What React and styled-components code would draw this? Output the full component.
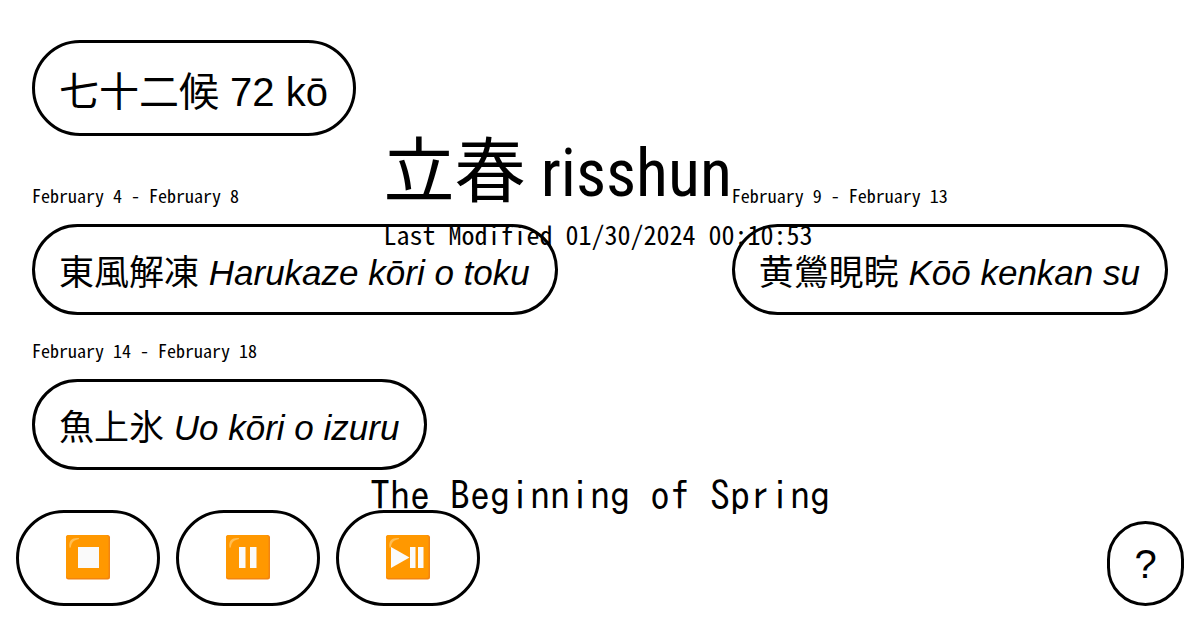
import React from "react";
import styled, { createGlobalStyle, css } from "styled-components";

const sans = `"Liberation Sans", "Noto Sans CJK JP", sans-serif`;
const narrow = `"Roboto Condensed", "Noto Sans CJK JP", sans-serif`;
const mono = `"Noto Sans Mono CJK JP", "Noto Sans CJK JP", monospace`;
const gothic = `"IPAGothic", "Noto Sans Mono CJK JP", monospace`;

const GlobalStyle = createGlobalStyle`
  * { box-sizing: border-box; }
  body {
    margin: 0;
    background: #fff;
    color: #000;
    font-family: ${sans};
  }
`;

const Page = styled.div`
  position: relative;
  min-height: 100vh;
  padding: 40px 32px;
`;

const outline = css`
  border: 3px solid #000;
  border-radius: 48px;
  background: transparent;
  color: #000;
  font-family: ${sans};
  white-space: nowrap;
`;

const Header = styled.header`
  display: flex;
  margin-bottom: 48px;
`;

const HomeLink = styled.a`
  ${outline}
  display: block;
  padding: 23px 25px 15px 24px;
  font-size: 40px;
  line-height: 52px;
  text-decoration: none;
`;

const SeasonList = styled.ul`
  display: flex;
  flex-wrap: wrap;
  justify-content: space-between;
  gap: 24px 32px;
  margin: 0;
  padding: 0;
  list-style: none;
`;

const Season = styled.li`
  display: flex;
  flex-direction: column;
  align-items: flex-start;
  gap: 18px;
`;

const Dates = styled.span`
  font-family: ${mono};
  font-size: 18px;
  line-height: 22px;
  white-space: nowrap;
`;

const SeasonLink = styled.a`
  ${outline}
  display: block;
  padding: 20px 25px 13px 24px;
  font-size: 35px;
  line-height: 52px;
  text-decoration: none;
`;

const TitleLayer = styled.div`
  position: absolute;
  top: 128px;
  left: 0;
  right: 4px;
  display: flex;
  justify-content: center;
  pointer-events: none;
`;

const Title = styled.h1`
  margin: 0;
  font-family: ${narrow};
  font-size: 71px;
  font-weight: 400;
  line-height: 88px;
  white-space: nowrap;
`;

const Reading = styled.span`
  font-size: 66px;
  line-height: 66px;
`;

const Modified = styled.p`
  margin: 0;
  font-family: ${mono};
  font-size: 26px;
  line-height: 36px;
  white-space: nowrap;
`;

const Meaning = styled.p`
  position: absolute;
  left: 0;
  right: 0;
  bottom: 107px;
  margin: 0;
  font-family: ${gothic};
  font-size: 40px;
  line-height: 56px;
  text-align: center;
  pointer-events: none;
`;

const Footer = styled.footer`
  position: absolute;
  left: 16px;
  right: 16px;
  bottom: 24px;
  display: flex;
  align-items: flex-end;
  justify-content: space-between;
`;

const Controls = styled.div`
  display: flex;
  gap: 16px;
`;

const ControlButton = styled.button`
  ${outline}
  display: flex;
  align-items: center;
  justify-content: center;
  width: 144px;
  height: 96px;
  padding: 0 0 2px;
`;

const HelpButton = styled.button`
  ${outline}
  width: 77px;
  height: 85px;
  padding: 2px 0 0;
  font-size: 40px;
`;

const Glyph = styled.svg`
  display: block;
  width: 46px;
  height: 46px;
`;

const shapes = {
  stop: <rect x="13" y="13" width="21" height="21" />,
  pause: (
    <>
      <rect x="14" y="13" width="6.5" height="21" />
      <rect x="25" y="13" width="6.5" height="21" />
    </>
  ),
  toggle: (
    <>
      <path d="M6 13 L24.5 23.5 L6 34 Z" />
      <rect x="25" y="13" width="5.5" height="21" />
      <rect x="33" y="13" width="5.5" height="21" />
    </>
  ),
};

const controls = [
  { shape: "stop", label: "Stop" },
  { shape: "pause", label: "Pause" },
  { shape: "toggle", label: "Play or pause" },
];

const seasons = [
  { dates: "February 4 - February 8", name: "東風解凍", reading: "Harukaze kōri o toku" },
  { dates: "February 9 - February 13", name: "黄鶯睍睆", reading: "Kōō kenkan su" },
  { dates: "February 14 - February 18", name: "魚上氷", reading: "Uo kōri o izuru" },
];

function ControlIcon({ shape }) {
  return (
    <Glyph viewBox="0 0 46 46" aria-hidden="true">
      <rect x="1" y="1" width="44" height="44.5" rx="2.5" fill="#f28410" />
      <rect x="1" y="1" width="42.5" height="43" rx="2.5" fill="#ff9800" />
      <path d="M4.5 13.5 C3.5 6 7 3.5 14 4 C14.5 5 13 5.5 11 6 C7 7.5 6.5 10 6 12.5 Q5.5 14.5 4.5 13.5 Z" fill="#ffbd52" />
      <g fill="#fafafa">{shapes[shape]}</g>
    </Glyph>
  );
}

export default function App() {
  return (
    <Page>
      <GlobalStyle />
      <Header>
        <HomeLink href="#home">七十二候 72 kō</HomeLink>
      </Header>
      <main>
        <SeasonList>
          {seasons.map((s) => (
            <Season key={s.name}>
              <Dates>{s.dates}</Dates>
              <SeasonLink href={`#${s.name}`}>
                {s.name} <em>{s.reading}</em>
              </SeasonLink>
            </Season>
          ))}
        </SeasonList>
        <TitleLayer>
          <div>
            <Title>立春<Reading> risshun</Reading></Title>
            <Modified>Last Modified 01/30/2024 00:10:53</Modified>
          </div>
        </TitleLayer>
        <Meaning>The Beginning of Spring</Meaning>
      </main>
      <Footer>
        <Controls>
          {controls.map((c) => (
            <ControlButton key={c.shape} type="button" aria-label={c.label}>
              <ControlIcon shape={c.shape} />
            </ControlButton>
          ))}
        </Controls>
        <HelpButton type="button">?</HelpButton>
      </Footer>
    </Page>
  );
}
